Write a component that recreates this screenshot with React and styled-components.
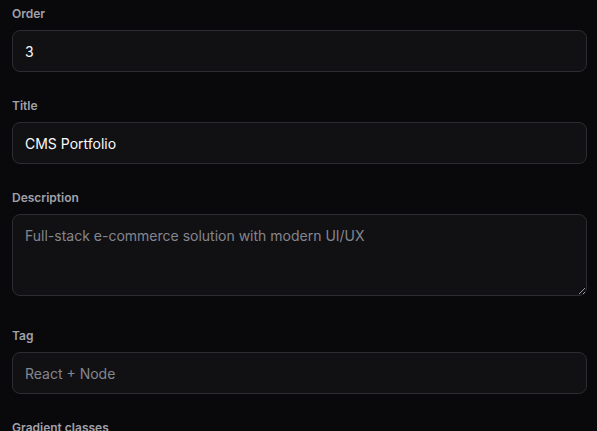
import React from 'react';
import styled, { createGlobalStyle } from 'styled-components';

const GlobalStyle = createGlobalStyle`
  html, body {
    margin: 0;
    padding: 0;
    background: #09090b;
  }
  body {
    font-family: Inter, 'Noto Sans', sans-serif;
    -webkit-font-smoothing: antialiased;
  }
`;

const Form = styled.form`
  display: flex;
  flex-direction: column;
  gap: 26px;
  padding: 6px 10px 0 12px;
  min-height: 100vh;
  box-sizing: border-box;
  background: #09090b;
`;

const Field = styled.div`
  display: flex;
  flex-direction: column;
  gap: 8px;
  margin-bottom: ${(props) => (props.extra ? `${props.extra}px` : '0')};
`;

const Label = styled.label`
  font-size: 12px;
  line-height: 16px;
  font-weight: 600;
  color: #a1a1aa;
`;

const inputBase = `
  box-sizing: border-box;
  width: 100%;
  margin: 0;
  padding: 0 12px;
  border: 1px solid #2c2c31;
  border-radius: 8px;
  background: #111114;
  color: #fafafa;
  font-family: Inter, 'Noto Sans', sans-serif;
  font-size: 14px;
  outline: none;

  &::placeholder {
    color: #85858e;
    opacity: 1;
  }
`;

const Input = styled.input`
  ${inputBase}
  height: 42px;
`;

const TextArea = styled.textarea`
  ${inputBase}
  display: block;
  height: 82px;
  padding-top: 11px;
  line-height: 20px;
  resize: vertical;
`;

const fields = [
  { id: 'order', label: 'Order', value: '3' },
  { id: 'title', label: 'Title', value: 'CMS Portfolio' },
  {
    id: 'description',
    label: 'Description',
    placeholder: 'Full-stack e-commerce solution with modern UI/UX',
    multiline: true,
  },
  { id: 'tag', label: 'Tag', placeholder: 'React + Node' },
  { id: 'gradient', label: 'Gradient classes', placeholder: 'from-blue-500 to-purple-600' },
];

const App = () => {
  return (
    <>
      <GlobalStyle />
      <Form onSubmit={(e) => e.preventDefault()}>
        {fields.map((f) => (
          <Field key={f.id} extra={f.multiline ? 6 : 0}>
            <Label htmlFor={f.id}>{f.label}</Label>
            {f.multiline ? (
              <TextArea id={f.id} placeholder={f.placeholder} defaultValue={f.value} />
            ) : (
              <Input id={f.id} placeholder={f.placeholder} defaultValue={f.value} />
            )}
          </Field>
        ))}
      </Form>
    </>
  );
};

export default App;
